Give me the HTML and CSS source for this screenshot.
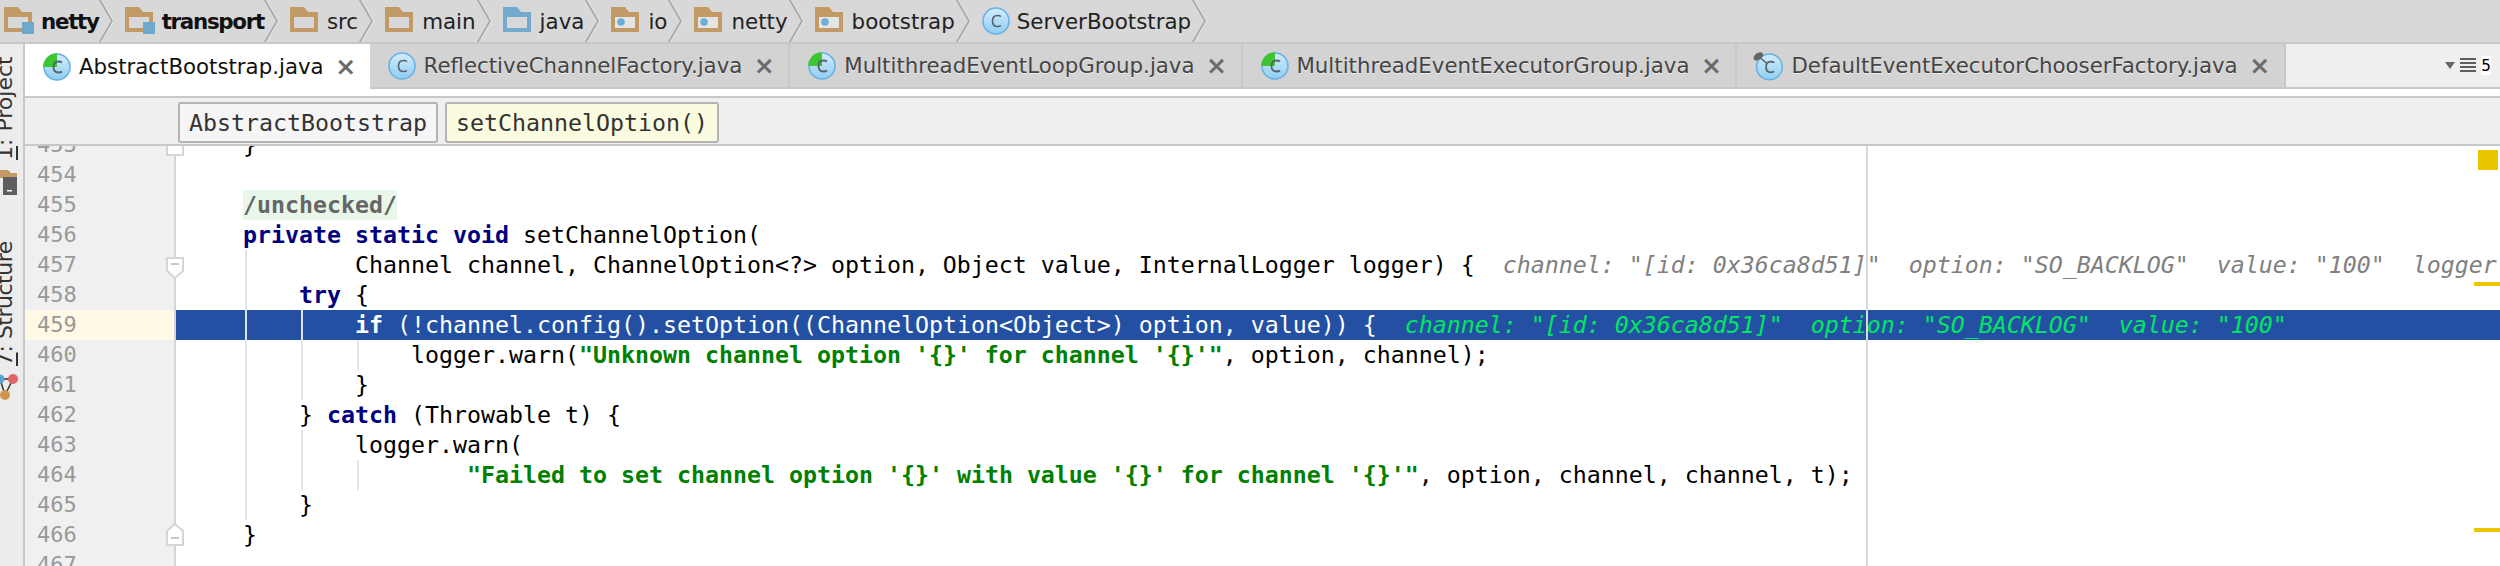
FILE: index.html
```html
<!DOCTYPE html>
<html lang="en">
<head>
<meta charset="utf-8">
<title>AbstractBootstrap.java</title>
<link rel="stylesheet" href="styles.css">
</head>
<body>
<svg class="defs" width="0" height="0" aria-hidden="true">
  <defs>
    <linearGradient id="cg" x1="0" y1="0" x2="0" y2="1">
      <stop offset="0" stop-color="#d4ecfb"/>
      <stop offset="1" stop-color="#8fcdf3"/>
    </linearGradient>
    <symbol id="folder" viewBox="0 0 30 28">
      <path d="M0 0h14l4 5h10v20H0zM4 10v11h20V10z" fill="#c29a66" fill-rule="evenodd"/>
    </symbol>
    <symbol id="module" viewBox="0 0 30 28">
      <path d="M0 0h14l4 5h10v20H0zM4 10v11h20V10z" fill="#c29a66" fill-rule="evenodd"/>
      <rect x="18" y="15" width="12" height="12" fill="#6ea8cc"/>
    </symbol>
    <symbol id="source" viewBox="0 0 30 28">
      <path d="M0 0h14l4 5h10v20H0zM4 10v11h20V10z" fill="#74aacd" fill-rule="evenodd"/>
    </symbol>
    <symbol id="package" viewBox="0 0 30 28">
      <path d="M4 10h20v11H4z" fill="#e4e4e4"/>
      <path d="M0 0h14l4 5h10v20H0zM4 10v11h20V10z" fill="#c29a66" fill-rule="evenodd"/>
      <circle cx="10" cy="15" r="3.8" fill="#6eaed6"/>
    </symbol>
    <symbol id="cls" viewBox="0 0 28 28">
      <circle cx="14" cy="14" r="13" fill="url(#cg)" stroke="#68b2e3" stroke-width="1.6"/>
      <path d="M19 9.500c-1-.8-2-1-3.500-1-3 0-5 2-5 5.500s2 5.500 5 5.500c1.500 0 2.500-.2 3.500-1" fill="none" stroke="#56636e" stroke-width="1.600"/>
    </symbol>
    <symbol id="cls-run" viewBox="0 0 28 28">
      <circle cx="14" cy="14" r="13" fill="url(#cg)" stroke="#68b2e3" stroke-width="1.6"/>
      <path d="M14 .2A13.800 13.800 0 0 0 .2 14H14z" fill="#3ec52f"/>
      <path d="M19 9.500c-1-.8-2-1-3.500-1-3 0-5 2-5 5.500s2 5.500 5 5.500c1.500 0 2.500-.2 3.500-1" fill="none" stroke="#56636e" stroke-width="1.800"/>
    </symbol>
    <symbol id="cls-pin" viewBox="0 0 31 30">
      <circle cx="17" cy="16" r="13.300" fill="url(#cg)" stroke="#68b2e3" stroke-width="1.6"/>
      <path d="M22 11.500c-1-.8-2-1-3.500-1-3 0-5 2-5 5.500s2 5.500 5 5.500c1.500 0 2.500-.2 3.500-1" fill="none" stroke="#56636e" stroke-width="1.800"/>
      <ellipse cx="5.500" cy="5" rx="5.500" ry="3.500" transform="rotate(-35 5.500 5)" fill="#666"/>
      <path d="M8 7l6 5" stroke="#666" stroke-width="1.500"/>
    </symbol>
  </defs>
</svg>

<nav class="crumbs">
  <span class="crumb strong"><svg class="ico-f"><use href="#module"/></svg>netty</span>
  <span class="crumb strong"><svg class="ico-f"><use href="#module"/></svg>transport</span>
  <span class="crumb"><svg class="ico-f"><use href="#folder"/></svg>src</span>
  <span class="crumb"><svg class="ico-f"><use href="#folder"/></svg>main</span>
  <span class="crumb"><svg class="ico-f"><use href="#source"/></svg>java</span>
  <span class="crumb"><svg class="ico-f"><use href="#package"/></svg>io</span>
  <span class="crumb"><svg class="ico-f"><use href="#package"/></svg>netty</span>
  <span class="crumb"><svg class="ico-f"><use href="#package"/></svg>bootstrap</span>
  <span class="crumb"><svg class="ico-c"><use href="#cls"/></svg>ServerBootstrap</span>
</nav>

<div class="workspace">
  <aside class="rail">
    <span class="rail-label project"><u>1</u>: Project</span>
    <svg class="rail-ico" viewBox="0 0 26 26"><path d="M0 0h8l3 3h6v5H0z" fill="#c29a66"/><rect x="3" y="7" width="14" height="18" fill="#5e5e5e"/><rect x="7" y="20" width="5" height="1.500" fill="#fff"/></svg>
    <span class="rail-label structure"><u>7</u>: Structure</span>
    <svg class="rail-ico graph" viewBox="0 0 26 30"><path d="M0 7h13L5 23 0 7" stroke="#333" stroke-width="1.500" fill="none"/><circle cx="0" cy="7" r="4.500" fill="#5ba3d0"/><circle cx="13" cy="7" r="5" fill="#e06666"/><circle cx="5" cy="23" r="5" fill="#d0964a"/></svg>
  </aside>

  <main class="content">
    <div class="tabs">
      <div class="tab active"><svg class="ico-c"><use href="#cls-run"/></svg><span>AbstractBootstrap.java</span><b class="close">×</b></div>
      <div class="tab"><svg class="ico-c"><use href="#cls"/></svg><span>ReflectiveChannelFactory.java</span><b class="close">×</b></div>
      <div class="tab"><svg class="ico-c"><use href="#cls-run"/></svg><span>MultithreadEventLoopGroup.java</span><b class="close">×</b></div>
      <div class="tab"><svg class="ico-c"><use href="#cls-run"/></svg><span>MultithreadEventExecutorGroup.java</span><b class="close">×</b></div>
      <div class="tab last"><svg class="ico-pin"><use href="#cls-pin"/></svg><span>DefaultEventExecutorChooserFactory.java</span><b class="close">×</b></div>
      <div class="tab-rest">
        <i class="tri"></i><i class="bars"></i><span class="count">5</span>
      </div>
    </div>

    <div class="navbar">
      <span class="chip">AbstractBootstrap</span>
      <span class="chip current">setChannelOption()</span>
    </div>

    <div class="editor">
      <i class="margin-line"></i>
      <i class="mark m1"></i><i class="mark m2"></i><i class="mark m3"></i>
      <div class="lines">
        <div class="row"><span class="num">453</span><svg class="fold" viewBox="0 0 20 30"><path d="M2 -4h16V25H2z" fill="#fff" stroke="#d5d5d5" stroke-width="2"/></svg><pre class="code">    }</pre></div>
        <div class="row"><span class="num">454</span><pre class="code"></pre></div>
        <div class="row"><span class="num">455</span><pre class="code">    <span class="folded">/unchecked/</span></pre></div>
        <div class="row"><span class="num">456</span><pre class="code">    <b class="kw">private static void</b> setChannelOption(</pre></div>
        <div class="row"><span class="num">457</span><svg class="fold" viewBox="0 0 20 30"><path d="M2 8h16v13l-8 7-8-7z" fill="#fff" stroke="#d5d5d5" stroke-width="2"/><path d="M6 14h8" stroke="#c8c8c8" stroke-width="2"/></svg><i class="guide g1"></i><pre class="code">            Channel channel, ChannelOption&lt;?&gt; option, Object value, InternalLogger logger) {  <em class="hint">channel: "[id: 0x36ca8d51]"  option: "SO_BACKLOG"  value: "100"  logger: "AbstractBootstrap"</em></pre></div>
        <div class="row"><span class="num">458</span><i class="guide g1"></i><pre class="code">        <b class="kw">try</b> {</pre></div>
        <div class="row selected"><span class="num">459</span><i class="guide g1"></i><i class="guide g2"></i><pre class="code">            <b>if</b> (!channel.config().setOption((ChannelOption&lt;Object&gt;) option, value)) {  <em class="hint">channel: "[id: 0x36ca8d51]"  option: "SO_BACKLOG"  value: "100"</em></pre></div>
        <div class="row"><span class="num">460</span><i class="guide g1"></i><i class="guide g2"></i><i class="guide g3"></i><pre class="code">                logger.warn(<b class="str">"Unknown channel option '{}' for channel '{}'"</b>, option, channel);</pre></div>
        <div class="row"><span class="num">461</span><i class="guide g1"></i><i class="guide g2"></i><pre class="code">            }</pre></div>
        <div class="row"><span class="num">462</span><i class="guide g1"></i><pre class="code">        } <b class="kw">catch</b> (Throwable t) {</pre></div>
        <div class="row"><span class="num">463</span><i class="guide g1"></i><i class="guide g2"></i><pre class="code">            logger.warn(</pre></div>
        <div class="row"><span class="num">464</span><i class="guide g1"></i><i class="guide g2"></i><i class="guide g3"></i><pre class="code">                    <b class="str">"Failed to set channel option '{}' with value '{}' for channel '{}'"</b>, option, channel, channel, t);</pre></div>
        <div class="row"><span class="num">465</span><i class="guide g1"></i><pre class="code">        }</pre></div>
        <div class="row"><span class="num">466</span><svg class="fold" viewBox="0 0 20 30"><path d="M2 11l8-7 8 7v14H2z" fill="#fff" stroke="#d5d5d5" stroke-width="2"/><path d="M6 18h8" stroke="#c8c8c8" stroke-width="2"/></svg><pre class="code">    }</pre></div>
        <div class="row"><span class="num">467</span><pre class="code"></pre></div>
      </div>
    </div>
  </main>
</div>
</body>
</html>
```
FILE: styles.css
```css
* { box-sizing: border-box; }
html, body { margin: 0; height: 100%; overflow: hidden; background: #fff; }
body { display: flex; flex-direction: column; font-family: "DejaVu Sans", sans-serif; }
.defs { position: absolute; }

.crumbs { height: 44px; flex: none; display: flex; background: #d8d8d8; border-bottom: 2px solid #c8c8c8; padding-left: 4px; }
.crumb { display: flex; align-items: center; gap: 7px; font-size: 21.4px; color: #222; padding-right: 27px; position: relative; white-space: nowrap; }
.crumb.strong { font-weight: 700; color: #111; letter-spacing: -1.3px; padding-right: 26px; }
.crumb::before, .crumb::after { content: ""; position: absolute; right: 12px; width: 2px; height: 21px; background: #a8a8a8; box-shadow: 1px 0 0 #e6e6e6; }
.crumb::before { top: 0; transform-origin: 50% 100%; transform: skewX(30deg); }
.crumb::after { top: 21px; transform-origin: 50% 0; transform: skewX(-30deg); }
.ico-f { width: 30px; height: 28px; flex: none; }
.ico-c { width: 28px; height: 28px; flex: none; }
.ico-pin { width: 30px; height: 30px; flex: none; }

.workspace { flex: 1; display: flex; min-height: 0; }
.rail { width: 25px; flex: none; display: flex; flex-direction: column; background: #ececec; border-right: 2px solid #c8c8c8; overflow: hidden; }
.rail-label { writing-mode: vertical-rl; transform: rotate(180deg); font-size: 22px; color: #333; white-space: nowrap; line-height: 22px; margin-left: -6px; flex: none; }
.rail-label.project { margin-top: 18px; height: 98px; }
.rail-ico { width: 26px; height: 26px; flex: none; margin-top: 10px; }
.rail-label.structure { margin-top: 44px; height: 126px; letter-spacing: -.5px; }
.rail-ico.graph { height: 30px; margin-top: 6px; }

.content { flex: 1; min-width: 0; display: flex; flex-direction: column; }
.tabs { height: 52px; flex: none; display: flex; background: #fff; }
.tab { display: flex; align-items: center; gap: 8px; height: 45px; padding: 0 17px 0 18px; background: #d3d3d3; border-right: 2px solid #c8c8c8; border-bottom: 2px solid #c8c8c8; font-size: 21.3px; color: #444; text-shadow: 0 1px 0 #eee; white-space: nowrap; }
.tab.active { background: #fff; color: #111; border: 0; height: 52px; padding-bottom: 7px; padding-right: 17px; text-shadow: none; }
.tab.last { padding-left: 16px; }
.tab .close { width: 14px; margin-left: 7px; display: flex; justify-content: center; font-size: 25px; line-height: 1; color: #6b6b6b; font-weight: 700; text-shadow: none; }
.tab-rest { flex: 1; height: 45px; background: #efefef; border-bottom: 2px solid #c8c8c8; display: flex; align-items: center; justify-content: flex-end; padding-right: 9px; }
.tri { width: 0; height: 0; border: 5px solid transparent; border-top: 7px solid #666; border-bottom: 0; margin-right: 5px; }
.bars { width: 16px; height: 15px; background: repeating-linear-gradient(#5e5e5e 0 2px, transparent 2px 4px); }
.count { font: 16px "DejaVu Sans Mono", monospace; color: #000; background: #fff; margin-left: 5px; }

.navbar { height: 50px; flex: none; display: flex; gap: 7px; padding: 4px 0 1px 153px; background: #efefef; border-top: 2px solid #c8c8c8; border-bottom: 2px solid #c8c8c8; }
.chip { font: 23.25px "DejaVu Sans Mono", monospace; color: #333; display: flex; align-items: center; padding: 0 9px; border: 2px solid #b4b4b4; background: #f5f5f5; border-radius: 3px; }
.chip.current { background: #fbfbdf; }

.editor { flex: 1; position: relative; overflow: hidden; background: #fff; }
.lines { margin-top: -16px; }
.row { display: flex; height: 30px; position: relative; }
.num { width: 151px; flex: none; background: #f0f0f0; border-right: 2px solid #d5d5d5; padding-left: 12px; font: 22px/30px "DejaVu Sans Mono", monospace; color: #999; }
.code { margin: 0; padding-left: 11px; font: 23.25px/30px "DejaVu Sans Mono", monospace; color: #000; white-space: pre; flex: 1; min-width: 0; overflow: hidden; }
.kw { color: #000080; font-weight: 700; }
.str { color: #008000; font-weight: 700; }
.folded { background: #e9f7ea; color: #666; font-weight: 700; display: inline-block; }
.hint { color: #808080; font-style: italic; }
.selected .num { background: #fff9e6; }
.selected .code { background: #2350a3; color: #fff; }
.selected .hint { color: #00e664; }
.guide { position: absolute; top: 0; bottom: 0; width: 2px; background: #e4e4e4; z-index: 1; }
.g1 { left: 220px; }
.g2 { left: 276px; }
.g3 { left: 332px; }
.selected .guide { background: #dfe4ee; }
.fold { position: absolute; left: 140px; top: 0; width: 20px; height: 30px; z-index: 2; }
.margin-line { position: absolute; left: 1841px; top: 0; bottom: 0; width: 2px; background: #d8d8d8; z-index: 3; }
.mark { position: absolute; background: #eac600; z-index: 3; }
.m1 { right: 2px; top: 4px; width: 20px; height: 20px; }
.m2 { right: 0; top: 136px; width: 26px; height: 4px; }
.m3 { right: 0; top: 382px; width: 26px; height: 4px; }
```
